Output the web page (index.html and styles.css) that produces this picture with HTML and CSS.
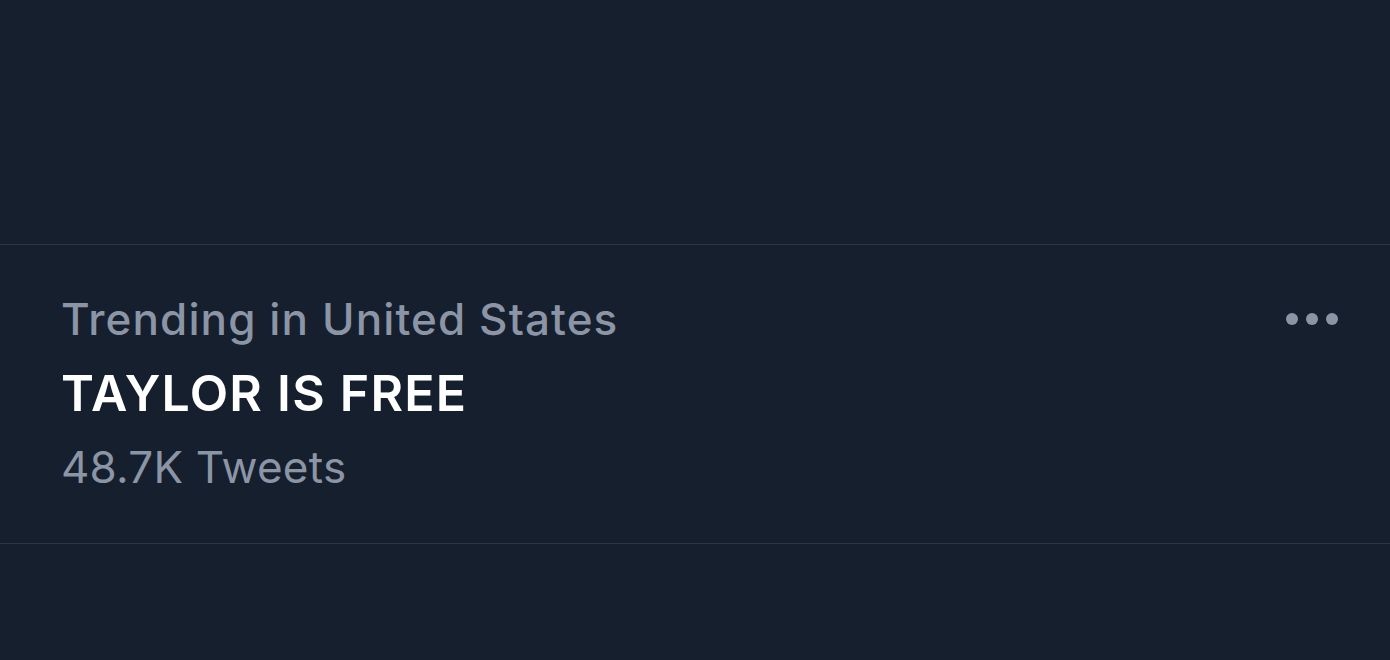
FILE: index.html
```html
<!DOCTYPE html>
<html>
<head>
<meta charset="utf-8">
<link rel="stylesheet" href="styles.css">
</head>
<body>
<div class="page">
  <div class="spacer"></div>
  <div class="trend">
    <div class="trend-text">
      <div class="meta">Trending in United States</div>
      <div class="title">TAYLOR IS FREE</div>
      <div class="count">48.7K Tweets</div>
    </div>
    <div class="more" aria-label="More">
      <span class="dot"></span><span class="dot"></span><span class="dot"></span>
    </div>
  </div>
</div>
</body>
</html>
```
FILE: styles.css
```css
html, body {
  margin: 0;
  padding: 0;
  background: #161f2e;
}
body {
  font-family: Inter, "Noto Sans", "Liberation Sans", sans-serif;
  width: 1390px;
  height: 660px;
  overflow: hidden;
}
.page {
  display: flex;
  flex-direction: column;
}
.spacer {
  height: 244px;
}
.trend {
  height: 298px;
  border-top: 1px solid #2c3645;
  border-bottom: 1px solid #2c3645;
  display: flex;
  justify-content: space-between;
  align-items: flex-start;
  padding: 0 52px 0 61px;
}
.trend-text {
  display: flex;
  flex-direction: column;
  padding-top: 37px;
}
.meta {
  color: #8b95a5;
  font-size: 44px;
  line-height: 74px;
  font-weight: 500;
  letter-spacing: 1.1px;
}
.title {
  color: #ffffff;
  font-size: 50px;
  line-height: 74px;
  font-weight: 600;
  letter-spacing: 1.25px;
}
.count {
  color: #8b95a5;
  font-size: 44px;
  line-height: 74px;
  font-weight: 400;
  letter-spacing: 0.2px;
}
.more {
  display: flex;
  gap: 8px;
  padding-top: 68px;
}
.dot {
  width: 12px;
  height: 12px;
  border-radius: 50%;
  background: #8b95a5;
}
```
